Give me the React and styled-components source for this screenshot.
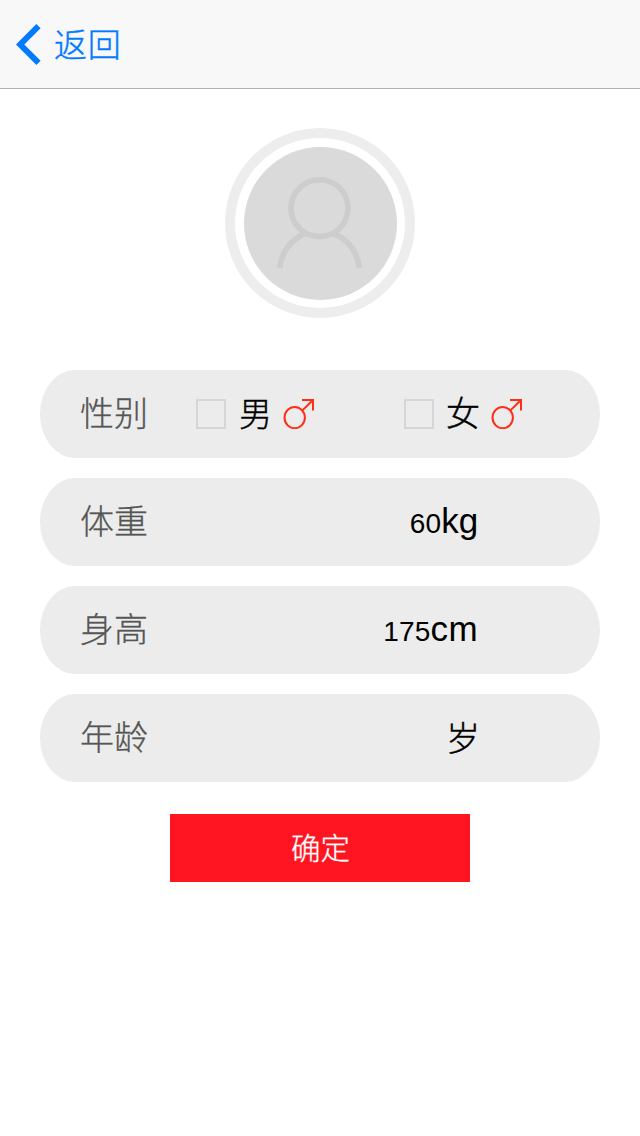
import React from "react";
import styled, { createGlobalStyle } from "styled-components";

const GlobalStyle = createGlobalStyle`
  * { box-sizing: border-box; }
  body {
    margin: 0;
    background: #fff;
    font-family: "Liberation Sans", "Noto Sans CJK SC", sans-serif;
    font-weight: 300;
  }
`;

const Screen = styled.div`
  min-height: 1136px;
  background: #fff;
`;

const NavBar = styled.header`
  height: 89px;
  display: flex;
  align-items: center;
  padding-left: 16px;
  background: #f8f8f8;
  border-bottom: 1px solid #b2b2b2;
`;

const BackButton = styled.button`
  display: flex;
  align-items: center;
  gap: 13px;
  padding: 0;
  border: 0;
  background: none;
  color: #007aff;
  font: 300 33px/44px "Noto Sans CJK SC", sans-serif;
  letter-spacing: 0.7px;
  -webkit-text-stroke: 0.4px currentColor;

  svg { display: block; }
  span { padding-bottom: 2px; }
`;

const Content = styled.main`
  display: flex;
  flex-direction: column;
  align-items: center;
  padding: 39px 40px 0;
`;

const AvatarRing = styled.div`
  width: 190px;
  height: 190px;
  padding: 9px 0 0 9px;
  border: 10px solid #ededed;
  border-radius: 50%;
`;

const AvatarDisc = styled.div`
  width: 153px;
  height: 153px;
  border-radius: 50%;
  background: #dadada;

  svg { display: block; }
`;

const Form = styled.div`
  width: 100%;
  display: flex;
  flex-direction: column;
  gap: 20px;
  margin-top: 52px;
`;

const Row = styled.div`
  height: 88px;
  display: flex;
  align-items: center;
  padding: 0 122px 0 40px;
  border-radius: 35px / 44px;
  background: #ececec;
`;

const GenderRow = styled(Row)`
  padding-right: 0;
`;

const Label = styled.span`
  width: 116px;
  flex: none;
  padding: 0 0 4px 0;
  color: #555;
  font: 300 34px/50px "Noto Sans CJK SC", sans-serif;
  -webkit-text-stroke: 0.3px currentColor;
`;

const Choice = styled.label`
  width: ${(p) => p.$width}px;
  flex: none;
  display: flex;
  align-items: center;
`;

const CheckBox = styled.span`
  width: 30px;
  height: 30px;
  border: 2px solid #d6d6d6;
`;

const ChoiceText = styled.span`
  width: 34px;
  margin: 0 ${(p) => 23 - p.$gap}px 0 ${(p) => p.$gap}px;
  padding-bottom: 4px;
  color: #000;
  font: 300 ${(p) => p.$size}px/50px "Noto Sans CJK SC", sans-serif;
  -webkit-text-stroke: 0.4px currentColor;
`;

const Value = styled.span`
  display: flex;
  align-items: baseline;
  margin-left: auto;
  padding-bottom: 2px;
  color: #000;
`;

const Amount = styled.span`
  font-size: 28px;
  letter-spacing: 0.2px;
`;

const Unit = styled.span`
  font-size: 35px;
  letter-spacing: ${(p) => p.$spacing}px;
`;

const CjkUnit = styled.span`
  margin-right: -2px;
  font: 300 34px/50px "Noto Sans CJK SC", sans-serif;
  -webkit-text-stroke: 0.4px currentColor;
`;

const SubmitButton = styled.button`
  width: 300px;
  height: 68px;
  margin-top: 32px;
  padding: 0 0 3px 1px;
  border: 0;
  background: #ff1521;
  color: #fff;
  font: 300 29.5px/65px "Noto Sans CJK SC", sans-serif;
  -webkit-text-stroke: 0.3px currentColor;
`;

const BackIcon = () => (
  <svg width="25" height="42" viewBox="0 0 25 42">
    <path d="M22.5 3.2 4.2 21.5 22.5 39.8" fill="none" stroke="#007aff" strokeWidth="6" />
  </svg>
);

const PersonIcon = () => (
  <svg width="153" height="153" viewBox="0 0 153 153" fill="none" stroke="#cdcdcd" strokeWidth="5.6">
    <circle cx="75.5" cy="61.2" r="28.5" />
    <path d="M61.5 86.6A39.7 39.7 0 0 0 35.9 121M89.5 86.6A39.7 39.7 0 0 1 115.1 121" />
  </svg>
);

const MarsIcon = () => (
  <svg width="32" height="30" viewBox="0 0 32 30" fill="none" stroke="#ff2d16" strokeWidth="2">
    <ellipse cx="11.7" cy="18.6" rx="10.2" ry="10.6" />
    <path d="M19.4 11.4 30 1M19 1H30V11.5" />
  </svg>
);

export default function App() {
  return (
    <Screen>
      <GlobalStyle />
      <NavBar>
        <BackButton>
          <BackIcon />
          <span>返回</span>
        </BackButton>
      </NavBar>
      <Content>
        <AvatarRing>
          <AvatarDisc>
            <PersonIcon />
          </AvatarDisc>
        </AvatarRing>
        <Form>
          <GenderRow>
            <Label>性别</Label>
            <Choice $width={208}>
              <CheckBox />
              <ChoiceText $gap={13} $size={33}>男</ChoiceText>
              <MarsIcon />
            </Choice>
            <Choice $width={130}>
              <CheckBox />
              <ChoiceText $gap={12} $size={34}>女</ChoiceText>
              <MarsIcon />
            </Choice>
          </GenderRow>
          <Row>
            <Label>体重</Label>
            <Value>
              <Amount>60</Amount>
              <Unit $spacing={-0.1}>kg</Unit>
            </Value>
          </Row>
          <Row>
            <Label>身高</Label>
            <Value>
              <Amount>175</Amount>
              <Unit $spacing={0.4}>cm</Unit>
            </Value>
          </Row>
          <Row>
            <Label>年龄</Label>
            <Value>
              <CjkUnit>岁</CjkUnit>
            </Value>
          </Row>
        </Form>
        <SubmitButton>确定</SubmitButton>
      </Content>
    </Screen>
  );
}
